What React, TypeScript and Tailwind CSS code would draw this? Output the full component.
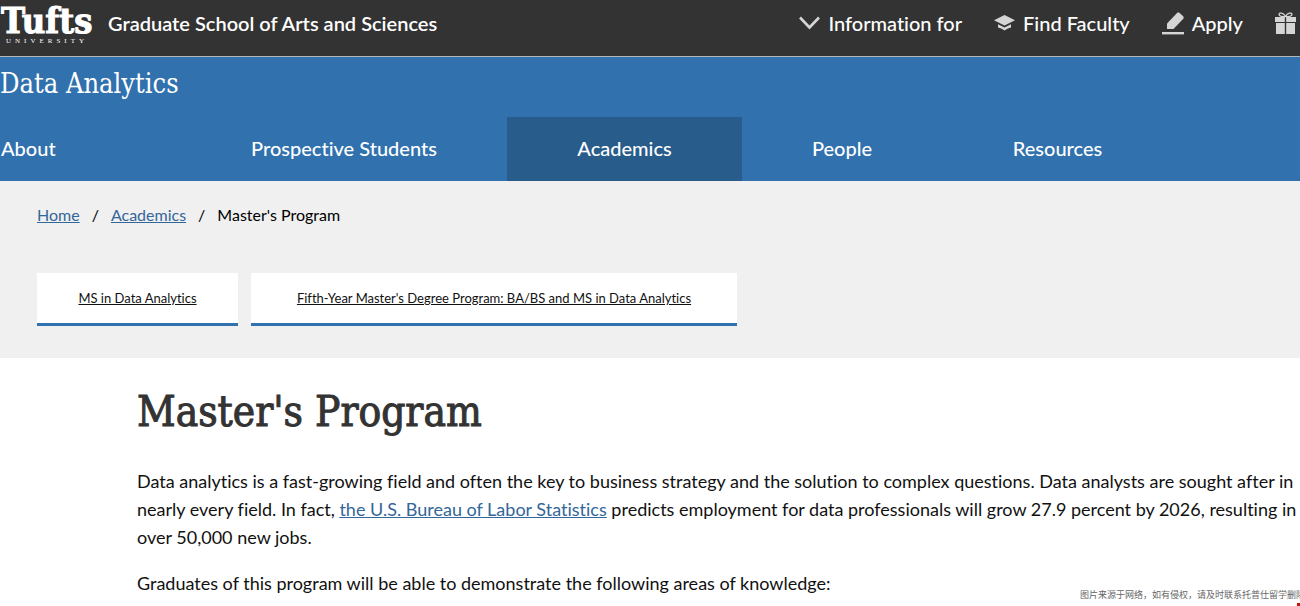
import type { ReactNode } from 'react';

type NavItem = {
  label: string;
  href: string;
  className: string;
};

const navItems: NavItem[] = [
  { label: 'About', href: '#about', className: 'w-[181px] justify-start pl-px' },
  { label: 'Prospective Students', href: '#prospective', className: 'w-[326px] justify-center' },
  { label: 'Academics', href: '#academics', className: 'w-[235px] justify-center bg-[#285c8a]' },
  { label: 'People', href: '#people', className: 'w-[200px] justify-center' },
  { label: 'Resources', href: '#resources', className: 'w-[231px] justify-center' },
];

const programs = [
  { label: 'MS in Data Analytics', href: '#ms', width: 'w-[201px]' },
  {
    label: "Fifth-Year Master's Degree Program: BA/BS and MS in Data Analytics",
    href: '#fifth-year',
    width: 'w-[486px]',
  },
];

const ChevronIcon = () => (
  <svg width="21" height="14" viewBox="0 0 21 14" fill="none" stroke="#d5d5d5" strokeWidth="2.6" aria-hidden="true">
    <path d="M1 1.5 10.5 11.5 20 1.5" />
  </svg>
);

const CapIcon = () => (
  <svg width="21" height="16" viewBox="0 0 21 16" fill="#d5d5d5" aria-hidden="true">
    <path d="M10.5 0 21 5.2 10.5 10.4 0 5.2Z" />
    <path d="M4 9.2 8 11.2 10.5 12.6 13 11.2 17 9.2V12.6Q14 13 10.5 15.4 7 13 4 12.6Z" />
  </svg>
);

const PencilIcon = () => (
  <svg width="22" height="23" viewBox="0 0 22 23" fill="#d5d5d5" aria-hidden="true">
    <path d="M17 0.5 21.5 4.5V6.5L11.5 17H5V11.5L15.5 0.5Z" />
    <path d="M0 20H22V22.4H0Z" />
  </svg>
);

const GiftIcon = () => (
  <svg width="21" height="23" viewBox="0 0 21 23" fill="#d5d5d5" aria-hidden="true">
    <path
      d="M10.5 4.5C8.5 1 4.5 0 4 2.4 4 4.5 8 4.6 10.5 4.5ZM10.5 4.5C12.5 1 16.5 0 17 2.4 17 4.5 13 4.6 10.5 4.5Z"
      fill="none"
      stroke="#d5d5d5"
      strokeWidth="1.3"
    />
    <path d="M0 5H9.8V10H0ZM11.2 5H21V10H11.2ZM1 11H9.8V22H1ZM11.2 11H20V22H11.2Z" />
  </svg>
);

const UtilityLink = ({ href, icon, children }: { href: string; icon: ReactNode; children: ReactNode }) => (
  <a href={href} className="flex items-center gap-2 whitespace-nowrap">
    {icon}
    <span>{children}</span>
  </a>
);

const Logo = () => (
  <svg width="94" height="46" viewBox="0 0 94 46" fill="#fff" role="img" aria-label="Tufts University">
    <text
      x="1"
      y="33"
      fontSize="36"
      fontWeight="700"
      fontFamily="'DejaVu Serif Condensed', 'DejaVu Serif', serif"
      stroke="#fff"
      strokeWidth="1"
    >
      Tufts
    </text>
    <text x="6" y="43" fontSize="7" fontWeight="400" letterSpacing="4" fontFamily="'Liberation Serif', serif">
      UNIVERSITY
    </text>
  </svg>
);

function Header() {
  return (
    <header className="flex h-[57px] items-start border-b border-[#b5b5b5] bg-[#333] text-xl font-semibold text-white">
      <a href="#home" className="shrink-0">
        <Logo />
      </a>
      <a href="#gsas" className="mt-2 ml-[14px] flex h-[30px] items-center whitespace-nowrap">
        Graduate School of Arts and Sciences
      </a>
      <div className="mt-2 mr-1 ml-auto flex h-[30px] items-center gap-8 font-medium">
        <button type="button" className="flex items-center gap-2 whitespace-nowrap">
          <ChevronIcon />
          <span>Information for</span>
        </button>
        <UtilityLink href="#faculty" icon={<CapIcon />}>
          Find Faculty
        </UtilityLink>
        <UtilityLink href="#apply" icon={<PencilIcon />}>
          Apply
        </UtilityLink>
        <a href="#give" aria-label="Give">
          <GiftIcon />
        </a>
      </div>
    </header>
  );
}

export default function App() {
  return (
    <div className="relative min-h-screen overflow-hidden bg-white font-['Lato','Liberation_Sans',sans-serif] text-[#111] [font-variant-ligatures:none]">
      <Header />

      <div className="bg-[#3071ae] text-white">
        <div className="flex h-[60px] items-center pb-1.5 font-['DejaVu_Serif_Condensed','DejaVu_Serif',serif] text-[27px]">
          <a href="#data-analytics">Data Analytics</a>
        </div>
        <nav className="flex h-16 text-xl font-medium" aria-label="Main">
          {navItems.map((item) => (
            <a
              key={item.label}
              href={item.href}
              className={`flex shrink-0 items-center pb-0.5 whitespace-nowrap ${item.className}`}
            >
              {item.label}
            </a>
          ))}
        </nav>
      </div>

      <section className="bg-[#f0f0f0] px-[37px] pt-[22px] pb-8">
        <nav className="flex h-6 items-center gap-3 text-base text-black" aria-label="Breadcrumb">
          <a href="#home" className="text-[#336699] underline">Home</a>
          <span>/</span>
          <a href="#academics" className="text-[#336699] underline">Academics</a>
          <span>/</span>
          <span>Master's Program</span>
        </nav>
        <div className="mt-[46px] flex gap-[13px] text-[13px]">
          {programs.map((program) => (
            <a
              key={program.label}
              href={program.href}
              className={`flex h-[53px] items-center justify-center border-b-[3px] border-[#3071ae] bg-white pt-0.5 whitespace-nowrap underline ${program.width}`}
            >
              {program.label}
            </a>
          ))}
        </div>
      </section>

      <main className="pt-[25px] pl-[137px] text-lg leading-7">
        <h1 className="mb-[26px] font-['DejaVu_Serif_Condensed','DejaVu_Serif',serif] text-[42px] leading-[58px] text-[#333] [-webkit-text-stroke:1px_#333]">
          Master's Program
        </h1>
        <p className="mb-[18px]">
          Data analytics is a fast-growing field and often the key to business strategy and the solution to complex
          questions. Data analysts are sought after in nearly every field. In fact,{' '}
          <a href="#bls" className="text-[#336699] underline">the U.S. Bureau of Labor Statistics</a> predicts
          employment for data professionals will grow 27.9 percent by 2026, resulting in over 50,000 new jobs.
        </p>
        <p>Graduates of this program will be able to demonstrate the following areas of knowledge:</p>
      </main>

      <div className="absolute right-0 bottom-1 w-[220px] overflow-hidden font-['Noto_Sans_CJK_SC',sans-serif] text-[9px] leading-[14px] whitespace-nowrap text-[#666]">
        图片来源于网络，如有侵权，请及时联系托普仕留学删除
      </div>
      <div className="absolute right-0 bottom-0 h-[3px] w-[3px] bg-[#cc1111]" />
    </div>
  );
}
